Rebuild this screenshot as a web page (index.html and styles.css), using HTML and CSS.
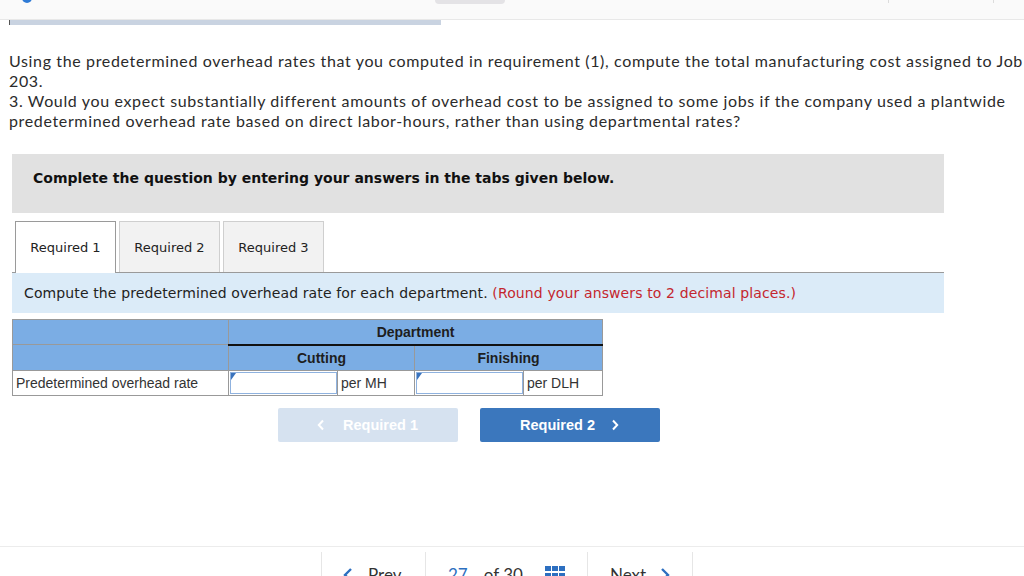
FILE: index.html
```html
<!DOCTYPE html>
<html lang="en">
<head>
<meta charset="utf-8">
<title>Required 1</title>
<link rel="stylesheet" href="styles.css">
</head>
<body>
<header class="topbar">
  <span class="dot"></span>
  <span class="pill"></span>
  <span class="sep sep-a"></span>
  <span class="sep sep-b"></span>
</header>
<div class="progress"></div>

<p class="question">Using the predetermined overhead rates that you computed in requirement (1), compute the total manufacturing cost assigned to Job<br>203.<br>3. Would you expect substantially different amounts of overhead cost to be assigned to some jobs if the company used a plantwide<br>predetermined overhead rate based on direct labor-hours, rather than using departmental rates?</p>

<div class="instructions">Complete the question by entering your answers in the tabs given below.</div>

<div class="tabs">
  <div class="tab active">Required 1</div>
  <div class="tab">Required 2</div>
  <div class="tab">Required 3</div>
</div>

<div class="prompt">Compute the predetermined overhead rate for each department. <span class="note">(Round your answers to 2 decimal places.)</span></div>

<table class="grid">
  <colgroup>
    <col class="c-label"><col class="c-in"><col class="c-unit1"><col class="c-in"><col class="c-unit2">
  </colgroup>
  <tr class="head">
    <th class="blank"></th>
    <th colspan="4" class="dept">Department</th>
  </tr>
  <tr class="head">
    <th class="blank"></th>
    <th colspan="2">Cutting</th>
    <th colspan="2">Finishing</th>
  </tr>
  <tr class="body-row">
    <td class="label">Predetermined overhead rate</td>
    <td class="in"><span class="field"><input type="text" aria-label="Cutting rate"></span></td>
    <td class="unit">per MH</td>
    <td class="in"><span class="field"><input type="text" aria-label="Finishing rate"></span></td>
    <td class="unit">per DLH</td>
  </tr>
</table>

<div class="buttons">
  <button class="btn btn-prev" type="button">
    <svg width="8" height="12" viewBox="0 0 8 12"><path d="M6 1.5 L1.8 6 L6 10.5" fill="none" stroke="#fff" stroke-width="2"/></svg>
    <span>Required 1</span>
  </button>
  <button class="btn btn-next" type="button">
    <span>Required 2</span>
    <svg width="8" height="12" viewBox="0 0 8 12"><path d="M2 1.5 L6.2 6 L2 10.5" fill="none" stroke="#fff" stroke-width="2"/></svg>
  </button>
</div>

<footer class="pager">
  <div class="pg pg-prev">
    <svg width="10" height="14" viewBox="0 0 10 14"><path d="M8 1 L2 7 L8 13" fill="none" stroke="#2d6fc0" stroke-width="2.4"/></svg>
    <span>Prev</span>
  </div>
  <div class="pg pg-mid">
    <span class="cur">27</span><span class="of">of 30</span>
    <svg class="gridicon" width="20" height="20" viewBox="0 0 20 20">
      <rect x="0" y="0" width="6" height="5" fill="#2d6fc0"/><rect x="7" y="0" width="6" height="5" fill="#2d6fc0"/><rect x="14" y="0" width="6" height="5" fill="#2d6fc0"/>
      <rect x="0" y="7" width="6" height="5" fill="#2d6fc0"/><rect x="7" y="7" width="6" height="5" fill="#2d6fc0"/><rect x="14" y="7" width="6" height="5" fill="#2d6fc0"/>
      <rect x="0" y="14" width="6" height="5" fill="#2d6fc0"/><rect x="7" y="14" width="6" height="5" fill="#2d6fc0"/><rect x="14" y="14" width="6" height="5" fill="#2d6fc0"/>
    </svg>
  </div>
  <div class="pg pg-next">
    <span>Next</span>
    <svg width="10" height="14" viewBox="0 0 10 14"><path d="M2 1 L8 7 L2 13" fill="none" stroke="#2d6fc0" stroke-width="2.4"/></svg>
  </div>
</footer>
</body>
</html>
```

FILE: styles.css
```css
html, body {
  margin: 0;
  padding: 0;
}
body {
  width: 1024px;
  height: 576px;
  overflow: hidden;
  background: #ffffff;
  font-family: "Lato", "Open Sans", sans-serif;
  color: #2b2b2b;
}

/* top bar */
.topbar {
  height: 19px;
  background: #fafafa;
  border-bottom: 1px solid #e8e8e8;
  display: flex;
  align-items: flex-start;
  overflow: hidden;
}
.dot {
  width: 10px;
  height: 10px;
  border-radius: 50%;
  background: #2f7bd6;
  margin-top: -7px;
  margin-left: 22px;
  flex: none;
}
.pill {
  width: 70px;
  height: 4px;
  background: #e4e3e6;
  border-radius: 0 0 8px 8px;
  margin-left: 403px;
  flex: none;
}
.sep {
  width: 1px;
  height: 3px;
  background: #dcdcdc;
  flex: none;
}
.sep-a { margin-left: 383px; }
.sep-b { margin-left: 104px; }

.progress {
  margin-left: 9px;
  width: 431px;
  height: 5px;
  background: #c9d3e1;
  border-left: 1px solid #555;
}

/* question text */
.question {
  margin: 26px 0 0 9px;
  font-size: 16px;
  line-height: 20px;
  letter-spacing: 0.64px;
  white-space: nowrap;
  color: #2b2b2b;
}

/* instruction box */
.instructions {
  margin: 23px 0 0 12px;
  width: 932px;
  height: 59px;
  box-sizing: border-box;
  padding: 16px 0 0 21px;
  background: #e1e1e1;
  font-family: "DejaVu Sans", Verdana, sans-serif;
  font-weight: bold;
  font-size: 14px;
  line-height: 17px;
  color: #111;
}

/* tabs */
.tabs {
  margin: 8px 0 0 12px;
  width: 932px;
  box-sizing: border-box;
  padding-left: 3px;
  display: flex;
  gap: 3px;
  border-bottom: 1px solid #9a9a9a;
}
.tab {
  width: 101px;
  height: 51px;
  box-sizing: border-box;
  border: 1px solid #cfcfcf;
  border-bottom: none;
  background: #f2f2f2;
  display: flex;
  align-items: center;
  justify-content: center;
  font-family: "DejaVu Sans", Verdana, sans-serif;
  font-size: 13px;
  color: #222;
}
.tab.active {
  background: #ffffff;
  border-color: #9a9a9a;
  height: 52px;
  margin-bottom: -1px;
}

/* prompt */
.prompt {
  margin-left: 12px;
  width: 932px;
  height: 40px;
  box-sizing: border-box;
  padding-left: 12px;
  background: #dbebf8;
  display: flex;
  align-items: center;
  font-family: "DejaVu Sans", Verdana, sans-serif;
  font-size: 14px;
  letter-spacing: 0.12px;
  color: #222;
  white-space: pre;
}
.note { color: #c4262e; }

/* table */
.grid {
  margin: 6px 0 0 12px;
  width: 590px;
  table-layout: fixed;
  border-collapse: collapse;
  font-family: "Liberation Sans", Arial, sans-serif;
  font-size: 14px;
  color: #222;
}
.c-label { width: 216px; }
.c-in { width: 109px; }
.c-unit1 { width: 77px; }
.c-unit2 { width: 79px; }
.grid th, .grid td {
  border: 1px solid #999;
  padding: 0;
}
.head th {
  background: #7badE4;
  height: 24px;
  font-weight: bold;
  text-align: center;
  color: #1e1e1e;
}
.head th.dept {
  border-bottom: 2px solid #111;
  height: 23px;
}
.body-row td {
  height: 23px;
  background: #fff;
}
.label {
  padding-left: 3px !important;
  color: #333;
}
.unit {
  padding-left: 3px !important;
  color: #333;
}
.in {
  padding: 1px 0 0 1px !important;
}
.field {
  position: relative;
  display: block;
  height: 22px;
}
.field::before {
  content: "";
  position: absolute;
  left: 1px;
  top: 1px;
  border-top: 7px solid #3a73bd;
  border-right: 5px solid transparent;
}
.field input {
  display: block;
  width: 100%;
  height: 22px;
  box-sizing: border-box;
  margin: 0;
  border: 1px solid #8fb2df;
  padding: 0;
  background: #fff;
  outline: none;
}

/* nav buttons */
.buttons {
  margin: 12px 0 0 278px;
  display: flex;
  gap: 22px;
}
.btn {
  width: 180px;
  height: 34px;
  border: none;
  border-radius: 2px;
  display: flex;
  align-items: center;
  justify-content: center;
  font-family: "Liberation Sans", Arial, sans-serif;
  font-weight: bold;
  font-size: 14.5px;
  color: #fff;
  padding: 0;
}
.btn-prev {
  background: #d6e2f0;
  gap: 18px;
  padding-right: 1px;
}
.btn-next {
  background: #3b77bd;
  gap: 16px;
  padding-right: 1px;
}

/* pager */
.pager {
  margin-top: 104px;
  border-top: 1px solid #ececec;
  padding: 5px 0 0 321px;
  display: flex;
  height: 40px;
}
.pg {
  height: 40px;
  box-sizing: border-box;
  border-left: 1px solid #e6e6e6;
  display: flex;
  align-items: flex-start;
  padding-top: 13px;
  font-family: "Lato", "Open Sans", sans-serif;
  font-size: 17px;
  line-height: 20px;
  color: #333;
}
.pg-prev {
  width: 104px;
  padding-left: 21px;
  gap: 15px;
}
.pg-prev svg { margin-top: 3px; }
.pg-mid {
  width: 162px;
  padding-left: 22px;
}
.cur { color: #2d6fc0; margin-right: 16px; }
.of { margin-right: 22px; }
.gridicon { margin-top: 1px; }
.pg-next {
  width: 106px;
  border-right: 1px solid #e6e6e6;
  padding-left: 22px;
  gap: 14px;
}
.pg-next svg { margin-top: 3px; }
```
